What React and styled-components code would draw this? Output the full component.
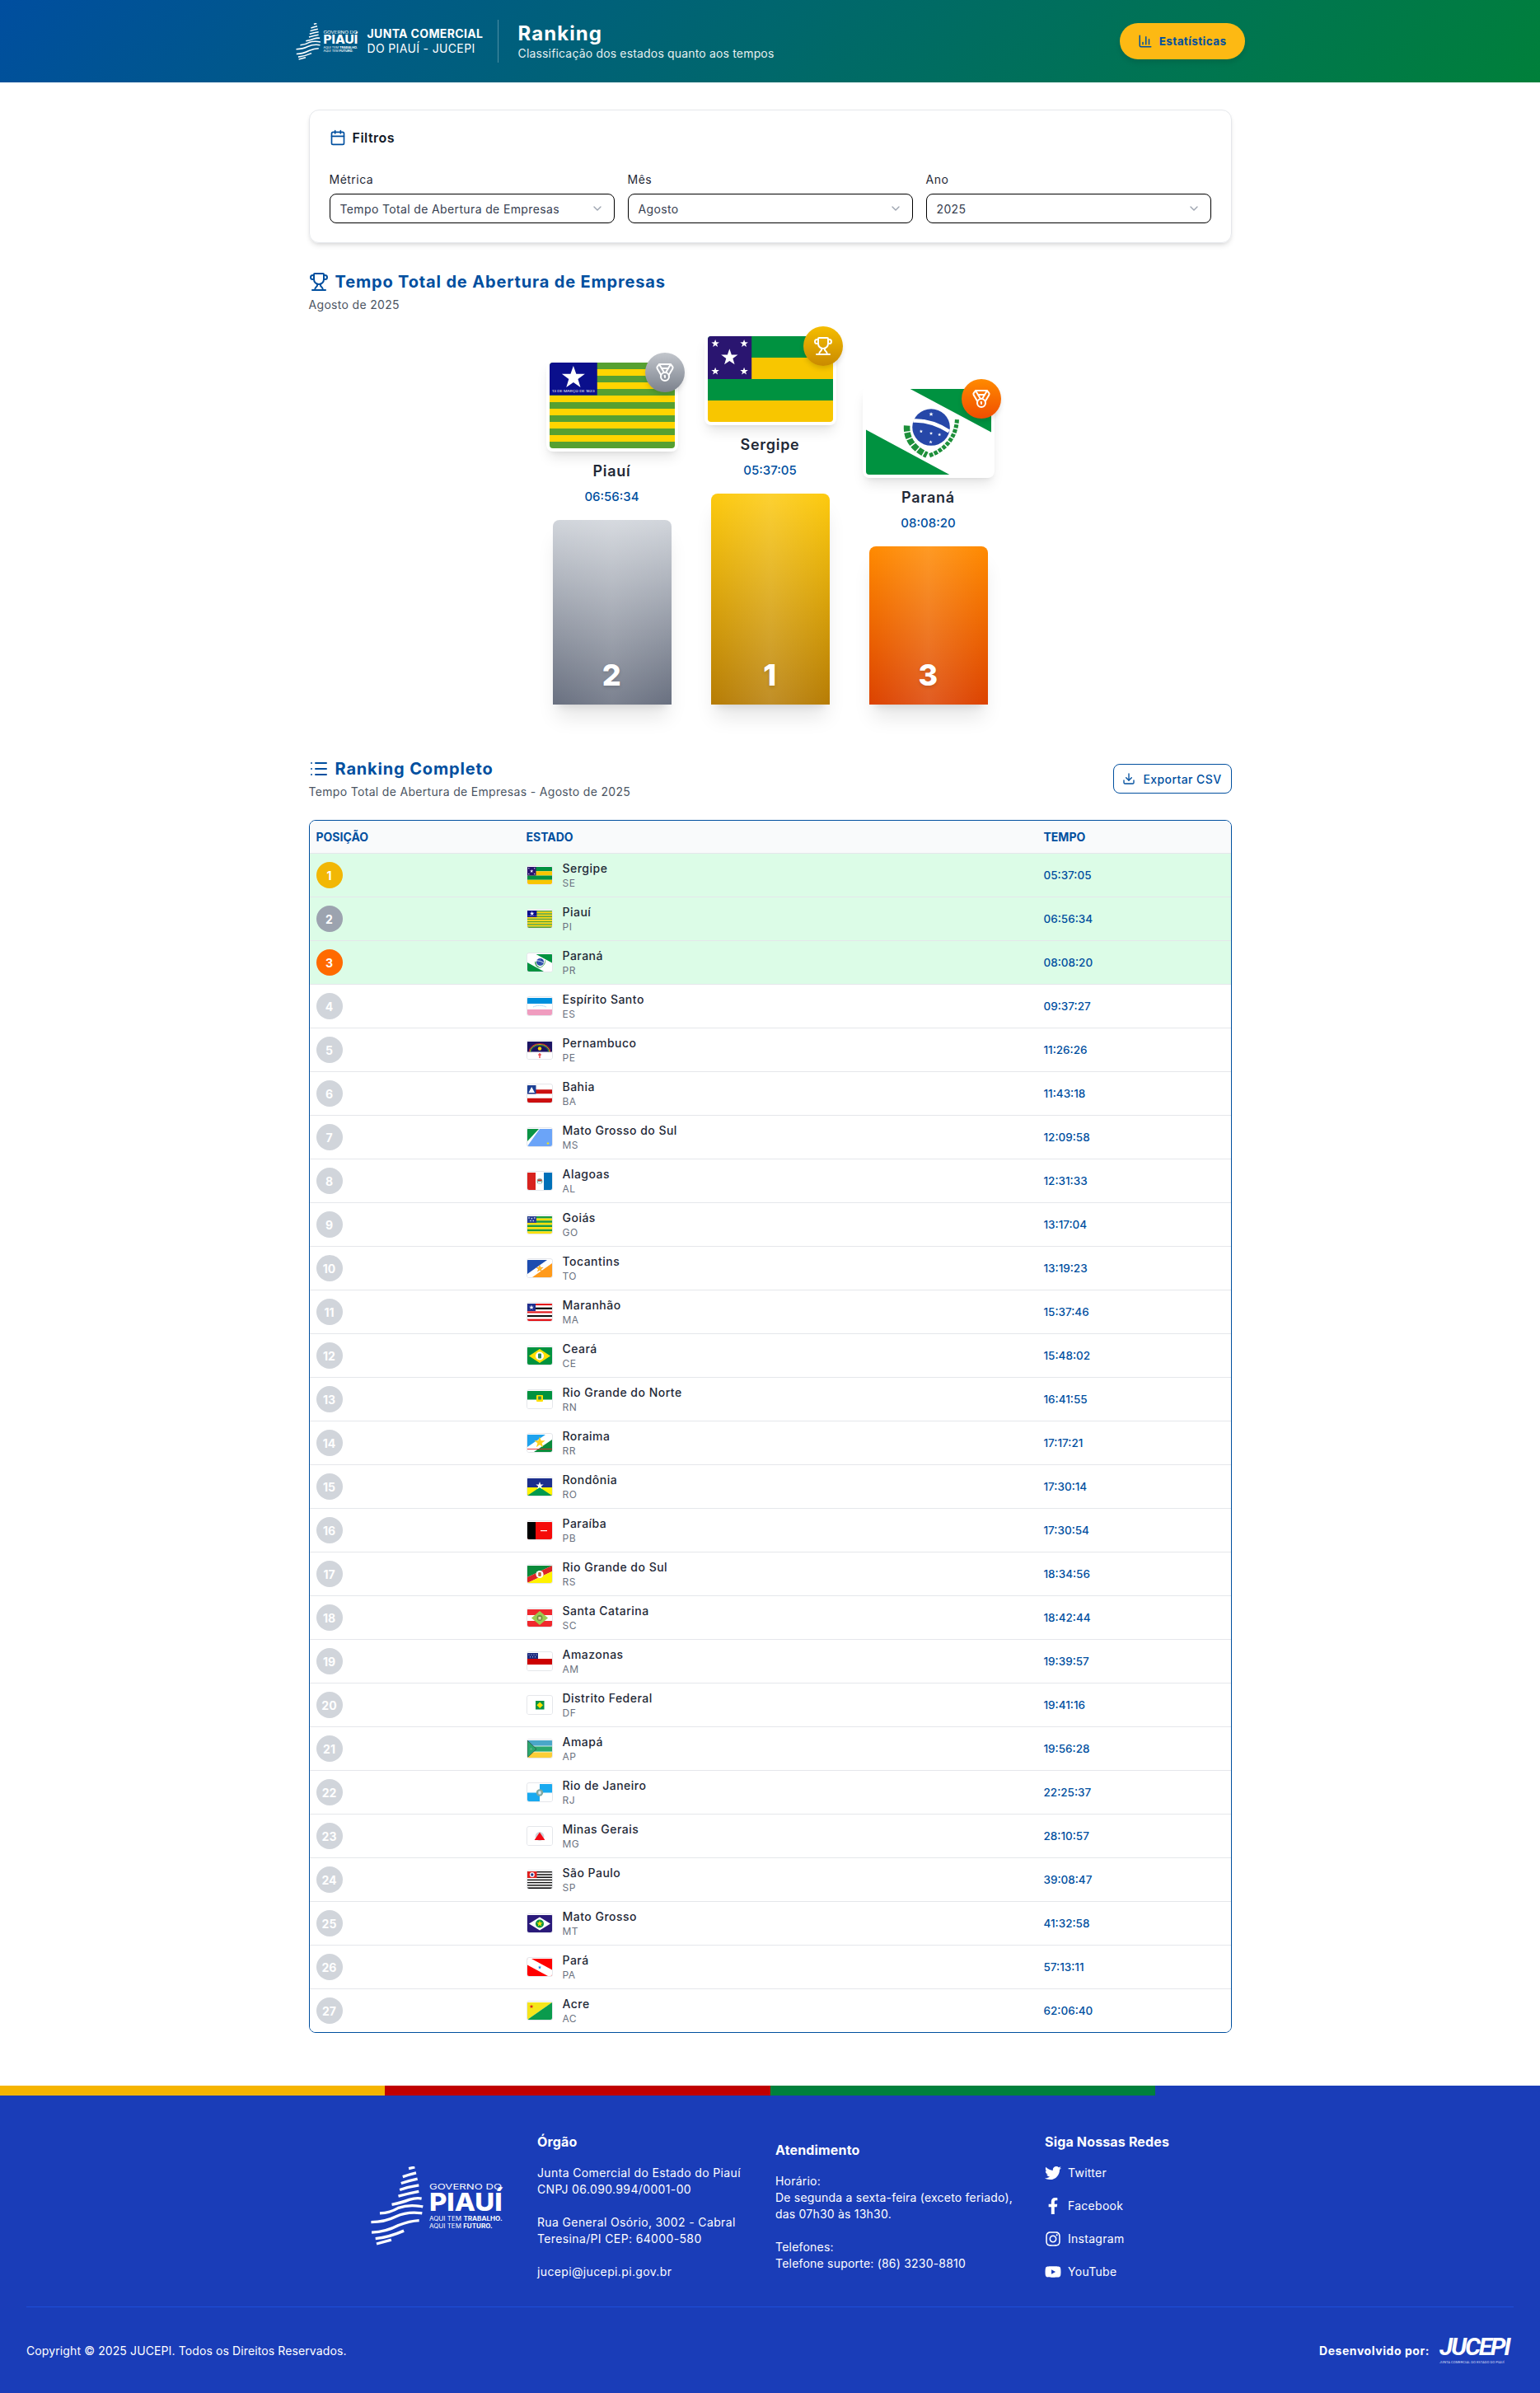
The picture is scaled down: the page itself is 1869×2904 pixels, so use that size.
import React from "react";
import styled, { createGlobalStyle } from "styled-components";
import { BarChart3, Calendar, ChevronDown, Download, List, Medal, Trophy } from "lucide-react";
import { FaFacebookF, FaInstagram, FaTwitter, FaYoutube } from "react-icons/fa";

const BLUE = "#004f9f";

const GlobalStyle = createGlobalStyle`
  * { box-sizing: border-box; }
  body {
    margin: 0;
    background: #fff;
    color: #1f2937;
    font-family: Inter, "Open Sans", sans-serif;
    letter-spacing: 0.03em;
  }
`;

const Header = styled.header`
  height: 100px;
  background: linear-gradient(135deg, #004e9f 0%, #00803a 100%);
  color: #fff;
`;

const HeaderInner = styled.div`
  width: 1152px;
  height: 100%;
  margin: 0 auto;
  display: flex;
  align-items: center;
  justify-content: space-between;
`;

const Brand = styled.div`
  display: flex;
  align-items: center;
`;

const BrandText = styled.div`
  width: 158px;
  margin-left: 11px;
  font-size: 14px;
  line-height: 18px;
  white-space: nowrap;
  letter-spacing: 0.025em;
  strong { display: block; font-weight: 700; }
`;

const HeaderDivider = styled.div`
  width: 1px;
  height: 52px;
  background: rgba(255, 255, 255, 0.3);
  margin-right: 24px;
`;

const PageTitle = styled.h1`
  margin: 0 0 -2px;
  font-size: 24px;
  line-height: 32px;
  font-weight: 700;
  letter-spacing: 0.045em;
`;

const PageSub = styled.p`
  margin: 0;
  font-size: 14px;
  line-height: 20px;
  opacity: 0.9;
  letter-spacing: 0.012em;
`;

const StatsButton = styled.button`
  width: 152px;
  height: 44px;
  border: 0;
  border-radius: 22px;
  background: #fdb913;
  color: ${BLUE};
  font: 700 13.5px Inter, sans-serif;
  letter-spacing: 0.03em;
  display: flex;
  align-items: center;
  justify-content: center;
  gap: 8px;
  box-shadow: 0 4px 6px rgba(0, 0, 0, 0.1);
`;

const Main = styled.main`
  width: 1120px;
  margin: 0 auto;
  padding-top: 33px;
`;

const FilterCard = styled.section`
  height: 162px;
  padding: 23px 24px 24px;
  border: 1px solid #e5e7eb;
  border-radius: 12px;
  box-shadow: 0 4px 6px -1px rgba(0, 0, 0, 0.1), 0 2px 4px -2px rgba(0, 0, 0, 0.1);
`;

const FilterHead = styled.div`
  display: flex;
  align-items: center;
  gap: 8px;
  height: 20px;
  margin-bottom: 31px;
  font-size: 16px;
  font-weight: 600;
  color: #111827;
  letter-spacing: 0.03em;
  svg { color: ${BLUE}; }
`;

const FilterGrid = styled.div`
  display: grid;
  grid-template-columns: repeat(3, 1fr);
  gap: 16px;
`;

const FieldLabel = styled.div`
  font-size: 14px;
  line-height: 20px;
  margin-bottom: 7px;
  color: #1f2937;
`;

const SelectBox = styled.div`
  height: 36px;
  padding: 0 12px;
  border: 1px solid #000;
  border-radius: 8px;
  display: flex;
  align-items: center;
  justify-content: space-between;
  font-size: 14px;
  letter-spacing: 0.026em;
  color: #374151;
  svg { color: #9ca3af; }
`;

const SectionTitle = styled.h2`
  margin: 0;
  display: flex;
  align-items: center;
  gap: 8px;
  font-size: 20px;
  line-height: 28px;
  font-weight: 700;
  color: ${BLUE};
  letter-spacing: 0.042em;
`;

const SectionSub = styled.p`
  margin: 4px 0 0;
  font-size: 14px;
  line-height: 20px;
  color: #4b5563;
  letter-spacing: 0.023em;
`;

const PodiumBlock = styled.section`
  margin-top: 33px;
`;

const Podium = styled.div`
  margin-top: 24px;
  display: flex;
  justify-content: center;
  align-items: flex-end;
  gap: 32px;
`;

const PodiumColumn = styled.div`
  width: 160px;
  display: flex;
  flex-direction: column;
  align-items: center;
`;

const BigFlag = styled.div`
  position: relative;
  width: 160px;
  height: 112px;
  padding: 4px;
  background: #fff;
  border-radius: 8px;
  box-shadow: 0 10px 15px -3px rgba(0, 0, 0, 0.1), 0 4px 6px -4px rgba(0, 0, 0, 0.1);
  svg.flag { display: block; width: 152px; height: 104px; border-radius: 4px; }
`;

const podiumTones = {
  gold: "linear-gradient(180deg, #f5bd00, #c98a00)",
  silver: "linear-gradient(180deg, #c2c6cc, #7b818c)",
  bronze: "linear-gradient(180deg, #ff8a00, #f04e00)",
};

const barTones = {
  gold: "linear-gradient(90deg, transparent, rgba(255,255,255,.14) 50%, transparent), linear-gradient(180deg, #fdca0f, #b67c05)",
  silver: "linear-gradient(90deg, transparent, rgba(255,255,255,.12) 50%, transparent), linear-gradient(180deg, #d1d5db, #697080)",
  bronze: "linear-gradient(90deg, transparent, rgba(255,255,255,.14) 50%, transparent), linear-gradient(180deg, #ff8a00, #dc4200)",
};

const Badge = styled.div`
  position: absolute;
  top: -8px;
  right: -8px;
  width: 48px;
  height: 48px;
  border-radius: 50%;
  background: ${(p) => podiumTones[p.$tone]};
  color: #fff;
  display: flex;
  align-items: center;
  justify-content: center;
  box-shadow: 0 4px 6px -1px rgba(0, 0, 0, 0.15);
`;

const PodiumName = styled.div`
  margin-top: 12px;
  font-size: 18px;
  line-height: 24px;
  font-weight: 600;
  color: #1f2937;
  letter-spacing: 0.04em;
`;

const PodiumTime = styled.div`
  margin-top: 7px;
  font-size: 15px;
  line-height: 24px;
  font-weight: 500;
  color: ${BLUE};
  letter-spacing: 0;
`;

const PodiumBar = styled.div`
  width: 144px;
  height: ${(p) => p.$height}px;
  margin-top: 16px;
  padding-bottom: 16px;
  border-radius: 8px 8px 0 0;
  background: ${(p) => barTones[p.$tone]};
  box-shadow: 0 20px 25px -5px rgba(0, 0, 0, 0.1), 0 8px 10px -6px rgba(0, 0, 0, 0.1);
  display: flex;
  align-items: flex-end;
  justify-content: center;
  color: #fff;
  font-size: 36px;
  line-height: 40px;
  font-weight: 800;
  text-shadow: 0 2px 4px rgba(0, 0, 0, 0.15);
`;

const RankingHead = styled.div`
  margin-top: 64px;
  margin-bottom: 24px;
  display: flex;
  align-items: center;
  justify-content: space-between;
`;

const ExportButton = styled.button`
  width: 144px;
  height: 36px;
  border: 1px solid ${BLUE};
  border-radius: 8px;
  background: #fff;
  color: ${BLUE};
  font: 500 14px Inter, sans-serif;
  letter-spacing: 0.03em;
  display: flex;
  align-items: center;
  justify-content: center;
  gap: 9px;
`;

const Table = styled.div`
  border: 1px solid ${BLUE};
  border-radius: 8px;
  overflow: hidden;
`;

const Row = styled.div`
  display: grid;
  grid-template-columns: 255px 628px 1fr;
  align-items: center;
  height: 53px;
  border-bottom: 1px solid #e5e7eb;
  background: ${(p) => (p.$top ? "#dcfce7" : "#fff")};
  &:last-child { height: 52px; border-bottom: 0; }
`;

const HeadRow = styled(Row)`
  height: 40px;
  background: #f9fafb;
`;

const HeadCell = styled.div`
  padding-left: 8px;
  font-size: 14px;
  font-weight: 700;
  color: ${BLUE};
  text-transform: uppercase;
  letter-spacing: 0;
`;

const Cell = styled.div`
  padding-left: 8px;
`;

const Position = styled.div`
  width: 32px;
  height: 32px;
  border-radius: 50%;
  background: ${(p) => p.$bg};
  color: #fff;
  font-size: 14px;
  font-weight: 700;
  letter-spacing: 0;
  display: flex;
  align-items: center;
  justify-content: center;
`;

const StateCell = styled.div`
  display: flex;
  align-items: center;
  gap: 12px;
`;

const SmallFlag = styled.div`
  width: 32px;
  height: 24px;
  border: 1px solid #e5e7eb;
  border-radius: 3px;
  overflow: hidden;
  display: flex;
  align-items: center;
  background: #fff;
  svg { display: block; width: 30px; height: 21px; }
`;

const StateName = styled.div`
  font-size: 14px;
  line-height: 20px;
  font-weight: 450;
  color: #1f2937;
`;

const StateCode = styled.div`
  font-size: 12px;
  line-height: 16px;
  color: #6b7280;
`;

const TimeText = styled.div`
  font-size: 13.5px;
  font-weight: 500;
  color: ${BLUE};
  letter-spacing: 0;
`;

const Footer = styled.footer`
  margin-top: 64px;
  background: #1a3db8;
  color: #fff;
`;

const Stripe = styled.div`
  display: grid;
  grid-template-columns: repeat(4, 1fr);
  height: 12px;
`;

const StripePart = styled.div`
  background: ${(p) => p.$color};
`;

const FooterTop = styled.div`
  padding-top: 44px;
  display: flex;
  justify-content: center;
  align-items: center;
  gap: 40px;
`;

const FooterColumn = styled.div`
  width: ${(p) => p.$width}px;
  font-size: 14px;
  line-height: 20px;
  white-space: nowrap;
  letter-spacing: ${(p) => p.$spacing || "0.02em"};
`;

const FooterTitle = styled.h3`
  margin: 0 0 16px;
  font-size: 16px;
  line-height: 24px;
  font-weight: 700;
  letter-spacing: 0.01em;
`;

const FooterLine = styled.p`
  margin: 0 0 ${(p) => (p.$gap ? 20 : 0)}px;
`;

const SocialList = styled.div`
  display: flex;
  flex-direction: column;
  gap: 20px;
`;

const SocialItem = styled.div`
  display: flex;
  align-items: center;
  gap: 8px;
  svg { width: 20px; height: 20px; flex: none; }
`;

const FooterBottom = styled.div`
  margin: 32px 32px 0;
  border-top: 1px solid #1d4ed8;
  height: 105px;
  display: flex;
  align-items: center;
  justify-content: space-between;
  font-size: 14px;
  letter-spacing: 0.008em;
`;

const Credit = styled.div`
  display: flex;
  align-items: center;
  gap: 12px;
  font-weight: 700;
  letter-spacing: 0.04em;
`;

const JucepiMark = styled.div`
  width: 90px;
  font-family: Roboto, sans-serif;
  white-space: nowrap;
`;

const JucepiName = styled.div`
  font-size: 30px;
  line-height: 30px;
  font-weight: 700;
  font-style: italic;
  letter-spacing: -0.075em;
`;

const JucepiSub = styled.div`
  font-size: 4.2px;
  line-height: 8px;
  font-weight: 400;
  letter-spacing: 0;
  color: #d5dcf5;
`;

function starPoints(cx, cy, r) {
  const pts = [];
  for (let i = 0; i < 10; i++) {
    const rad = i % 2 ? r * 0.4 : r;
    const a = (Math.PI / 5) * i - Math.PI / 2;
    pts.push(`${(cx + rad * Math.cos(a)).toFixed(2)},${(cy + rad * Math.sin(a)).toFixed(2)}`);
  }
  return pts.join(" ");
}

const Star = ({ x, y, r, fill = "#fff" }) => <polygon points={starPoints(x, y, r)} fill={fill} />;

const Bands = ({ colors, from = 0, to = 21 }) => {
  const h = (to - from) / colors.length;
  return colors.map((c, i) => <rect key={i} x="0" y={from + i * h} width="30" height={h + 0.02} fill={c} />);
};

const repeat = (list, n) => Array.from({ length: n }, (_, i) => list[i % list.length]);

// flags are all drawn on a 30x21 canvas
const flags = {
  SE: (
    <>
      <Bands colors={["#009240", "#f8c600", "#009240", "#f8c600"]} />
      <rect width="10.5" height="10.5" fill="#2a1570" />
      <Star x={5.2} y={5.2} r={2.1} />
      <Star x={1.8} y={1.8} r={1} />
      <Star x={8.7} y={1.8} r={1} />
      <Star x={1.8} y={8.6} r={1} />
      <Star x={8.7} y={8.6} r={1} />
    </>
  ),
  PI: (
    <>
      <Bands colors={repeat(["#56a031", "#ffd500"], 13)} />
      <rect width="11.4" height="8" fill="#0a0f8c" />
      <Star x={5.7} y={3.7} r={2.9} />
      <text x="0.6" y="7.3" fontSize="0.72" fill="#fff" fontFamily="Inter, sans-serif" letterSpacing="0" textLength="10.2" lengthAdjust="spacingAndGlyphs">13 DE MARÇO DE 1823</text>
    </>
  ),
  PR: (
    <>
      <rect width="30" height="21" fill="#fff" />
      <polygon points="10.6,0 30,0 30,10.6" fill="#009240" />
      <polygon points="0,10 20,21 0,21" fill="#009240" />
      <path d="M9.8 9 C9.6 12 11.2 14.6 14.6 16.2" fill="none" stroke="#1d8f3a" strokeWidth="1.5" strokeDasharray="1.4 .3" />
      <path d="M21.8 7.5 C21.6 11.5 19.4 14.8 15 16.4" fill="none" stroke="#1d8f3a" strokeWidth="1" strokeDasharray=".9 .3" />
      <circle cx="15.6" cy="9.4" r="4.5" fill="#2647a8" />
      <path d="M11.3 7.8 Q15.6 7.6 19.9 10.4" fill="none" stroke="#fff" strokeWidth="0.9" />
      <Star x={15.6} y={6.2} r={0.55} />
      <Star x={13.2} y={10.4} r={0.45} />
      <Star x={15.6} y={10.9} r={0.45} />
      <Star x={17.6} y={11.2} r={0.45} />
      <Star x={15.5} y={13} r={0.45} />
    </>
  ),
  ES: (
    <>
      <Bands colors={["#0090dd", "#fff", "#f09cbf"]} />
      <path d="M7 11 Q15 7.5 23 11" fill="none" stroke="#7cc8f0" strokeWidth="0.7" strokeDasharray="1.5 .4" />
    </>
  ),
  PE: (
    <>
      <rect width="30" height="21" fill="#fff" />
      <rect width="30" height="12.5" fill="#1b1464" />
      <path d="M2 12.5 A13 10 0 0 1 28 12.5" fill="none" stroke="#e8262a" strokeWidth="0.8" />
      <path d="M3.2 12.5 A11.8 9 0 0 1 26.8 12.5" fill="none" stroke="#ffd400" strokeWidth="0.8" />
      <path d="M4.4 12.5 A10.6 8 0 0 1 25.6 12.5" fill="none" stroke="#16a34a" strokeWidth="0.8" />
      <circle cx="15" cy="8.5" r="2.2" fill="#ffd400" />
      <path d="M15 14 V20 M13 16 H17" stroke="#e8262a" strokeWidth="1.2" />
    </>
  ),
  BA: (
    <>
      <Bands colors={["#fff", "#cc0f0f", "#fff", "#cc0f0f"]} />
      <rect width="10.5" height="10.5" fill="#1c3f94" />
      <polygon points="5.2,2 9,9 1.5,9" fill="#fff" />
    </>
  ),
  MS: (
    <>
      <rect width="30" height="21" fill="#6ba4f8" />
      <polygon points="0,0 15,0 0,21" fill="#fff" />
      <polygon points="0,0 14,0 0,15" fill="#0a9444" />
      <Star x={25} y={17.5} r={2} fill="#ffe600" />
    </>
  ),
  AL: (
    <>
      <rect width="30" height="21" fill="#fff" />
      <rect width="10" height="21" fill="#d8231f" />
      <rect x="20" width="10" height="21" fill="#0070b8" />
      <circle cx="15" cy="10.5" r="3.4" fill="#7fb8a8" />
      <rect x="12.5" y="8.5" width="5" height="1.6" fill="#d8231f" />
      <rect x="13" y="11" width="4" height="2.6" fill="#e6eef6" />
    </>
  ),
  GO: (
    <>
      <Bands colors={repeat(["#1a9a3f", "#ffe000"], 8)} />
      <rect width="11" height="7.9" fill="#2a3f94" />
      {[[2, 2], [5.4, 2.8], [8.8, 2], [4, 5.6], [7.2, 5.6]].map(([x, y], i) => (
        <circle key={i} cx={x} cy={y} r="0.75" fill="#fff" />
      ))}
    </>
  ),
  TO: (
    <>
      <rect width="30" height="21" fill="#fff" />
      <polygon points="0,0 24,0 0,17" fill="#1d4db0" />
      <polygon points="30,4 30,21 6,21" fill="#ff9a1a" />
      <Star x={15} y={10.5} r={5} fill="#ff9a1a" />
      <circle cx="15" cy="10.5" r="2.2" fill="#ffc233" />
    </>
  ),
  MA: (
    <>
      <Bands colors={["#e3151a", "#fff", "#111", "#fff", "#e3151a", "#fff", "#111", "#fff", "#e3151a"]} />
      <rect width="10" height="9" fill="#1f2f8f" />
      <Star x={5} y={4.6} r={3} />
    </>
  ),
  CE: (
    <>
      <rect width="30" height="21" fill="#00923f" />
      <polygon points="15,2 28,10.5 15,19 2,10.5" fill="#ffe000" />
      <circle cx="15" cy="10.5" r="5" fill="#fff" />
      <rect x="13" y="7.5" width="4" height="6" rx="1" fill="#2b8a5a" />
    </>
  ),
  RN: (
    <>
      <rect width="30" height="21" fill="#fff" />
      <rect width="30" height="10.5" fill="#00923f" />
      <rect x="11" y="5" width="8" height="8" rx="1" fill="#ffe000" />
      <rect x="13.2" y="6.5" width="3.6" height="4" fill="#2b8a5a" />
    </>
  ),
  RR: (
    <>
      <rect width="30" height="21" fill="#fff" />
      <polygon points="0,0 22,0 0,15" fill="#1fa3ee" />
      <polygon points="30,6 30,21 8,21" fill="#0a8a3a" />
      <rect y="17" width="30" height="0.9" fill="#e3262e" />
      <Star x={15} y={9.5} r={7} fill="#ffd21f" />
    </>
  ),
  RO: (
    <>
      <rect width="30" height="21" fill="#1c2f8c" />
      <polygon points="0,11 15,11 30,11 30,21 0,21" fill="#fff200" />
      <polygon points="15,11 30,21 0,21" fill="#009a4e" />
      <Star x={15} y={9} r={5} />
    </>
  ),
  PB: (
    <>
      <rect width="30" height="21" fill="#f50a0a" />
      <rect width="10" height="21" fill="#000" />
      <rect x="16" y="10" width="8" height="1.2" fill="#fff" />
    </>
  ),
  RS: (
    <>
      <polygon points="0,0 30,0 0,14" fill="#0a8a3a" />
      <polygon points="30,0 30,7 0,21 0,14" fill="#dc2626" />
      <polygon points="30,7 30,21 0,21" fill="#fff200" />
      <circle cx="15" cy="10.5" r="4.6" fill="#fff" />
      <rect x="13.2" y="8" width="3.6" height="5" rx="1" fill="#c2693a" />
    </>
  ),
  SC: (
    <>
      <Bands colors={["#f0282d", "#fff", "#f0282d"]} />
      <polygon points="15,2 25,10.5 15,19 5,10.5" fill="#9ccb4f" />
      <circle cx="15" cy="10.5" r="3.4" fill="#6c8f3f" />
      <rect x="13.4" y="9" width="3.2" height="3.4" fill="#e8dcae" />
    </>
  ),
  AM: (
    <>
      <Bands colors={["#fff", "#cc0000", "#fff"]} />
      <rect width="13" height="7" fill="#1c2b80" />
      {[[2, 2], [5, 2], [8, 2], [11, 2], [3.5, 4.8], [6.5, 4.8], [9.5, 4.8]].map(([x, y], i) => (
        <circle key={i} cx={x} cy={y} r="0.5" fill="#fff" />
      ))}
    </>
  ),
  DF: (
    <>
      <rect width="30" height="21" fill="#fff" />
      <rect x="10" y="5" width="10.5" height="10.5" fill="#0a9444" />
      <polygon points="15.2,6.5 19,10.2 15.2,14 11.4,10.2" fill="#ffe000" />
    </>
  ),
  AP: (
    <>
      <Bands colors={["#4aa7c9", "#2ba86e", "#fbce36"]} />
      <rect y="6.6" width="30" height="0.8" fill="#fff" />
      <rect y="13.6" width="30" height="0.8" fill="#fff" />
      <polygon points="0,0 11,10.5 0,21" fill="#2ba86e" stroke="#333" strokeWidth="0.6" />
      <Star x={4.5} y={10.5} r={2} fill="#6b8" />
    </>
  ),
  RJ: (
    <>
      <rect width="30" height="21" fill="#fff" />
      <rect x="15" width="15" height="10.5" fill="#19aaf0" />
      <rect y="10.5" width="15" height="10.5" fill="#19aaf0" />
      <circle cx="15" cy="10.5" r="4.2" fill="#7fa8a0" />
      <rect x="13.4" y="8.6" width="3.2" height="4" rx="1" fill="#dfe8ee" />
    </>
  ),
  MG: (
    <>
      <rect width="30" height="21" fill="#fff" />
      <circle cx="15" cy="10.5" r="5.4" fill="#d1d5db" />
      <polygon points="15,5.6 21.4,15 8.6,15" fill="#f30a14" />
    </>
  ),
  SP: (
    <>
      <Bands colors={repeat(["#111", "#fff"], 13)} />
      <rect width="11.5" height="8" fill="#e0201f" />
      <circle cx="5.8" cy="4" r="3" fill="#fff" />
      <circle cx="5.8" cy="4" r="1.7" fill="#1f3a8a" />
    </>
  ),
  MT: (
    <>
      <rect width="30" height="21" fill="#2a1a7a" />
      <polygon points="15,2.5 28,10.5 15,18.5 2,10.5" fill="#fff" />
      <circle cx="15" cy="10.5" r="5" fill="#0a9444" />
      <Star x={15} y={10.5} r={4} fill="#ffdd00" />
    </>
  ),
  PA: (
    <>
      <rect width="30" height="21" fill="#ff0000" />
      <polygon points="0,0 5,0 30,13.5 30,21 25,21 0,7.5" fill="#fff" />
      <Star x={15} y={10.5} r={2.2} fill="#1e80e0" />
    </>
  ),
  AC: (
    <>
      <polygon points="0,0 30,0 0,21" fill="#f5e51b" />
      <polygon points="30,0 30,21 0,21" fill="#0a9b4d" />
      <Star x={5} y={5} r={2.6} fill="#d8201c" />
    </>
  ),
};

const states = [
  ["Sergipe", "SE", "05:37:05"],
  ["Piauí", "PI", "06:56:34"],
  ["Paraná", "PR", "08:08:20"],
  ["Espírito Santo", "ES", "09:37:27"],
  ["Pernambuco", "PE", "11:26:26"],
  ["Bahia", "BA", "11:43:18"],
  ["Mato Grosso do Sul", "MS", "12:09:58"],
  ["Alagoas", "AL", "12:31:33"],
  ["Goiás", "GO", "13:17:04"],
  ["Tocantins", "TO", "13:19:23"],
  ["Maranhão", "MA", "15:37:46"],
  ["Ceará", "CE", "15:48:02"],
  ["Rio Grande do Norte", "RN", "16:41:55"],
  ["Roraima", "RR", "17:17:21"],
  ["Rondônia", "RO", "17:30:14"],
  ["Paraíba", "PB", "17:30:54"],
  ["Rio Grande do Sul", "RS", "18:34:56"],
  ["Santa Catarina", "SC", "18:42:44"],
  ["Amazonas", "AM", "19:39:57"],
  ["Distrito Federal", "DF", "19:41:16"],
  ["Amapá", "AP", "19:56:28"],
  ["Rio de Janeiro", "RJ", "22:25:37"],
  ["Minas Gerais", "MG", "28:10:57"],
  ["São Paulo", "SP", "39:08:47"],
  ["Mato Grosso", "MT", "41:32:58"],
  ["Pará", "PA", "57:13:11"],
  ["Acre", "AC", "62:06:40"],
];

const podium = [
  { code: "PI", name: "Piauí", time: "06:56:34", place: 2, tone: "silver", height: 224, Icon: Medal },
  { code: "SE", name: "Sergipe", time: "05:37:05", place: 1, tone: "gold", height: 256, Icon: Trophy },
  { code: "PR", name: "Paraná", time: "08:08:20", place: 3, tone: "bronze", height: 192, Icon: Medal },
];

const positionColors = { 1: "#f2b705", 2: "#9ca3af", 3: "#ff6a00" };

const FlagArt = ({ code, className }) => (
  <svg className={className} viewBox="0 0 30 21" preserveAspectRatio="none">
    {flags[code]}
  </svg>
);

const wavePaths = [
  "M168 36 L190 31",
  "M146 66 Q170 58 195 52",
  "M140 90 Q172 80 200 74",
  "M135 114 Q170 102 205 97",
  "M130 137 Q165 128 205 120",
  "M106 168 Q145 160 170 150 Q195 142 215 146",
  "M62 200 Q100 198 130 180 Q170 166 220 176",
  "M30 232 Q80 232 120 212 Q165 192 217 200",
  "M32 270 Q85 268 130 244 Q170 228 206 226",
  "M46 293 Q95 288 150 264",
  "M50 312 L104 297",
];

const PiauiLogo = ({ width, height }) => (
  <svg width={width} height={height} viewBox="27 28 490 290" fill="#fff">
    {wavePaths.map((d, i) => (
      <path key={i} d={d} fill="none" stroke="#fff" strokeWidth="10" />
    ))}
    <g fontFamily="Inter, sans-serif" letterSpacing="0">
      <text x="243" y="112" fontSize="28" textLength="266" lengthAdjust="spacingAndGlyphs">GOVERNO DO</text>
      <text x="243" y="192" fontSize="92" fontWeight="800" textLength="268" lengthAdjust="spacingAndGlyphs">PIAUÍ</text>
      <text x="243" y="228" fontSize="21" textLength="268" lengthAdjust="spacingAndGlyphs">
        AQUI TEM <tspan fontWeight="700">TRABALHO.</tspan>
      </text>
      <text x="243" y="254" fontSize="21" textLength="232" lengthAdjust="spacingAndGlyphs">
        AQUI TEM <tspan fontWeight="700">FUTURO.</tspan>
      </text>
    </g>
  </svg>
);

const App = () => {
  return (
    <>
      <GlobalStyle />
      <Header>
        <HeaderInner>
          <Brand>
            <PiauiLogo width={76} height={45} />
            <BrandText>
              <strong>JUNTA COMERCIAL</strong>
              DO PIAUÍ - JUCEPI
            </BrandText>
            <HeaderDivider />
            <div>
              <PageTitle>Ranking</PageTitle>
              <PageSub>Classificação dos estados quanto aos tempos</PageSub>
            </div>
          </Brand>
          <StatsButton>
            <BarChart3 size={18} />
            Estatísticas
          </StatsButton>
        </HeaderInner>
      </Header>

      <Main>
        <FilterCard>
          <FilterHead>
            <Calendar size={20} />
            Filtros
          </FilterHead>
          <FilterGrid>
            <div>
              <FieldLabel>Métrica</FieldLabel>
              <SelectBox>
                Tempo Total de Abertura de Empresas
                <ChevronDown size={16} />
              </SelectBox>
            </div>
            <div>
              <FieldLabel>Mês</FieldLabel>
              <SelectBox>
                Agosto
                <ChevronDown size={16} />
              </SelectBox>
            </div>
            <div>
              <FieldLabel>Ano</FieldLabel>
              <SelectBox>
                2025
                <ChevronDown size={16} />
              </SelectBox>
            </div>
          </FilterGrid>
        </FilterCard>

        <PodiumBlock>
          <SectionTitle>
            <Trophy size={24} />
            Tempo Total de Abertura de Empresas
          </SectionTitle>
          <SectionSub>Agosto de 2025</SectionSub>
          <Podium>
            {podium.map(({ code, name, time, place, tone, height, Icon }) => (
              <PodiumColumn key={code}>
                <BigFlag>
                  <FlagArt code={code} className="flag" />
                  <Badge $tone={tone}>
                    <Icon size={24} />
                  </Badge>
                </BigFlag>
                <PodiumName>{name}</PodiumName>
                <PodiumTime>{time}</PodiumTime>
                <PodiumBar $tone={tone} $height={height}>{place}</PodiumBar>
              </PodiumColumn>
            ))}
          </Podium>
        </PodiumBlock>

        <RankingHead>
          <div>
            <SectionTitle>
              <List size={24} />
              Ranking Completo
            </SectionTitle>
            <SectionSub>Tempo Total de Abertura de Empresas - Agosto de 2025</SectionSub>
          </div>
          <ExportButton>
            <Download size={16} />
            Exportar CSV
          </ExportButton>
        </RankingHead>

        <Table>
          <HeadRow>
            <HeadCell>Posição</HeadCell>
            <HeadCell>Estado</HeadCell>
            <HeadCell>Tempo</HeadCell>
          </HeadRow>
          {states.map(([name, code, time], i) => (
            <Row key={code} $top={i < 3}>
              <Cell>
                <Position $bg={positionColors[i + 1] || "#d1d5db"}>{i + 1}</Position>
              </Cell>
              <Cell>
                <StateCell>
                  <SmallFlag>
                    <FlagArt code={code} />
                  </SmallFlag>
                  <div>
                    <StateName>{name}</StateName>
                    <StateCode>{code}</StateCode>
                  </div>
                </StateCell>
              </Cell>
              <Cell>
                <TimeText>{time}</TimeText>
              </Cell>
            </Row>
          ))}
        </Table>
      </Main>

      <Footer>
        <Stripe>
          <StripePart $color="#f5b400" />
          <StripePart $color="#c00000" />
          <StripePart $color="#00803c" />
          <StripePart $color="#1a3db8" />
        </Stripe>
        <FooterTop>
          <PiauiLogo width={163} height={96} />
          <FooterColumn $width={249} $spacing="0.026em">
            <FooterTitle>Órgão</FooterTitle>
            <FooterLine>Junta Comercial do Estado do Piauí</FooterLine>
            <FooterLine $gap>CNPJ 06.090.994/0001-00</FooterLine>
            <FooterLine>Rua General Osório, 3002 - Cabral</FooterLine>
            <FooterLine $gap>Teresina/PI CEP: 64000-580</FooterLine>
            <FooterLine>jucepi@jucepi.pi.gov.br</FooterLine>
          </FooterColumn>
          <FooterColumn $width={287} $spacing="0.015em">
            <FooterTitle>Atendimento</FooterTitle>
            <FooterLine>Horário:</FooterLine>
            <FooterLine>De segunda a sexta-feira (exceto feriado),</FooterLine>
            <FooterLine $gap>das 07h30 às 13h30.</FooterLine>
            <FooterLine>Telefones:</FooterLine>
            <FooterLine>Telefone suporte: (86) 3230-8810</FooterLine>
          </FooterColumn>
          <FooterColumn $width={152}>
            <FooterTitle>Siga Nossas Redes</FooterTitle>
            <SocialList>
              <SocialItem><FaTwitter />Twitter</SocialItem>
              <SocialItem><FaFacebookF />Facebook</SocialItem>
              <SocialItem><FaInstagram />Instagram</SocialItem>
              <SocialItem><FaYoutube />YouTube</SocialItem>
            </SocialList>
          </FooterColumn>
        </FooterTop>
        <FooterBottom>
          <span>Copyright © 2025 JUCEPI. Todos os Direitos Reservados.</span>
          <Credit>
            Desenvolvido por:
            <JucepiMark>
              <JucepiName>JUCEPI</JucepiName>
              <JucepiSub>JUNTA COMERCIAL DO ESTADO DO PIAUÍ</JucepiSub>
            </JucepiMark>
          </Credit>
        </FooterBottom>
      </Footer>
    </>
  );
};

export default App;
